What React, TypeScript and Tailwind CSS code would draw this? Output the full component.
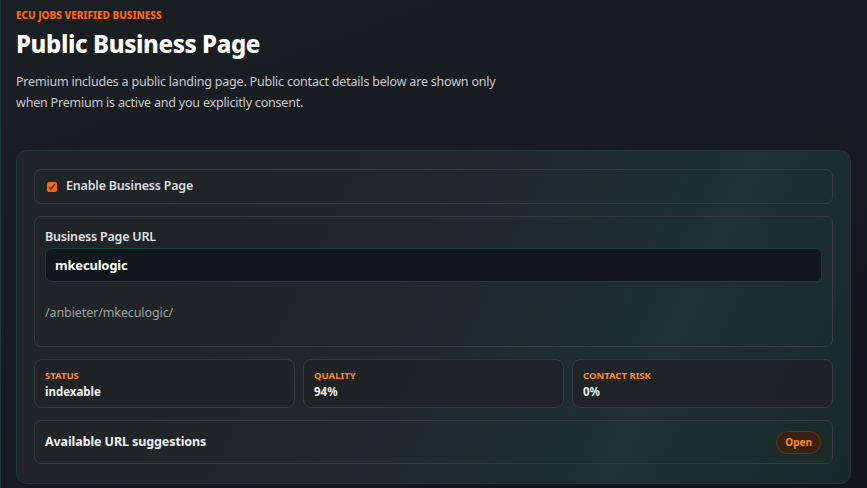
import React, { useState } from "react";

const Stat = ({ label, value }: { label: string; value: string }) => (
    <div className="flex-1 rounded-lg border border-[#363b40] bg-[#1f2326]/80 px-[10px] pt-[10px] pb-[7px]">
        <div className="text-[9.5px] font-bold uppercase leading-[12px] text-[#ff8a1a]">{label}</div>
        <div className="mt-[2px] text-[11.5px] font-bold leading-[16px] text-[#eef0f2]">{value}</div>
    </div>
);

export default function App() {
    const [enabled, setEnabled] = useState(true);
    const [slug, setSlug] = useState("mkeculogic");

    return (
        <div
            className="min-h-[488px] w-full border-l border-[#1d3a32] bg-[linear-gradient(160deg,#1b1e23_0%,#181b1f_45%,#111518_100%)] pl-[15px] pr-4 pt-[8px] pb-[6px]"
            style={{ fontFamily: '"Noto Sans", "Open Sans", sans-serif' }}
        >
            {/* Kopfbereich */}
            <div className="text-[10px] font-extrabold uppercase leading-[14px] text-[#ff6a00]">
                ECU Jobs Verified Business
            </div>
            <h1 className="mt-[7px] text-[24px] font-extrabold leading-[30px] tracking-[-0.4px] text-white">
                Public Business Page
            </h1>
            <p className="mt-[12px] max-w-[500px] text-[12.5px] leading-[21px] tracking-[-0.2px] text-[#c7cbd1]">
                Premium includes a public landing page. Public contact details below are shown only
                when Premium is active and you explicitly consent.
            </p>

            {/* Karte */}
            <div className="mt-[37px] flex flex-col gap-3 rounded-[11px] border border-[#1e3a35] bg-[linear-gradient(115deg,#212427_0%,#222629_45%,#1e3030_75%,#182a28_100%)] px-[17px] pt-[18px] pb-[19px]">
                <label className="flex h-[35px] cursor-pointer items-center gap-[9px] rounded-[7px] border border-[#383d42] px-[12px]">
                    <input
                        type="checkbox"
                        checked={enabled}
                        onChange={() => setEnabled(!enabled)}
                        className="h-[10px] w-[10px] accent-[#ff6a00]"
                    />
                    <span className="text-[12.5px] font-semibold tracking-[-0.2px] text-[#d9dce0]">Enable Business Page</span>
                </label>

                <div className="rounded-[7px] border border-[#383d42] px-[10px] pt-[10px] pb-[24px]">
                    <div className="text-[12.5px] font-semibold leading-[20px] tracking-[-0.2px] text-[#dfe2e6]">Business Page URL</div>
                    <input
                        value={slug}
                        onChange={(e) => setSlug(e.target.value)}
                        className="mt-[1px] h-[34px] w-full rounded-[6px] border border-[#1a413c] bg-[#11171a] px-[9px] text-[13px] font-bold tracking-[-0.2px] text-white outline-none"
                    />
                    <div className="mt-[22px] text-[12.5px] leading-[18px] tracking-[-0.1px] text-[#9ca1a7]">/anbieter/{slug}/</div>
                </div>

                <div className="flex gap-2">
                    <Stat label="Status" value="indexable" />
                    <Stat label="Quality" value="94%" />
                    <Stat label="Contact Risk" value="0%" />
                </div>

                <div className="flex h-[44px] items-center justify-between rounded-[7px] border border-[#383d42] pl-[10px] pr-[11px]">
                    <span className="text-[12.5px] font-bold tracking-[-0.1px] text-[#f1f2f4]">Available URL suggestions</span>
                    <button className="h-[23px] rounded-full border border-[#6a3413] bg-[#3a2213] px-[8px] text-[10px] font-bold text-[#ff8a1a]">
                        Open
                    </button>
                </div>
            </div>
        </div>
    );
}
